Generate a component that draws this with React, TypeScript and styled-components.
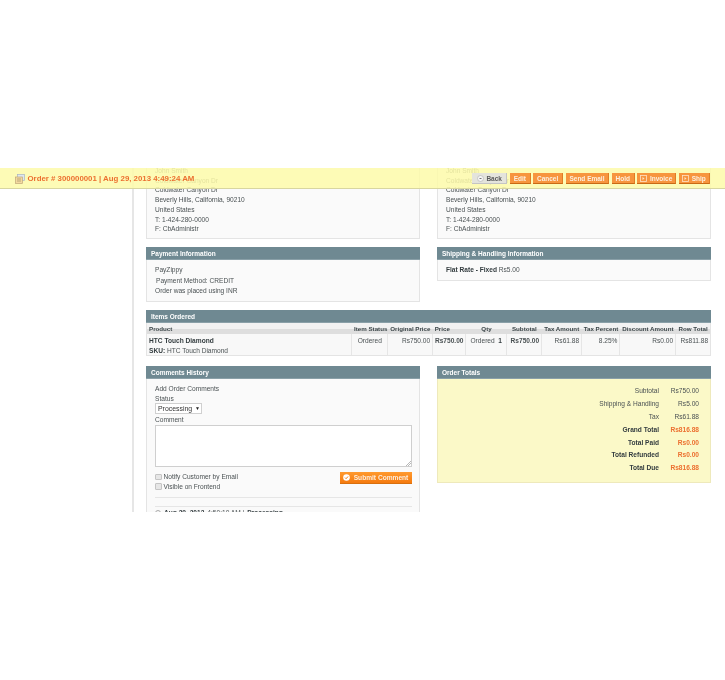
import React from 'react';
import styled, { createGlobalStyle } from 'styled-components';

const Global = createGlobalStyle`
  html, body { margin: 0; padding: 0; background: #fff; }
  body { font-family: "Liberation Sans", Arial, sans-serif; font-size: 6.6px; line-height: 9.7px; color: #4a5153; }
  * { box-sizing: border-box; }
`;

const Page = styled.div`
  position: relative;
  width: 725px;
  height: 680px;
  overflow: hidden;
  filter: blur(0.42px);
`;
const Viewport = styled.div`
  margin-top: 168px;
  height: 344px;
  overflow: hidden;
`;
const Main = styled.main`
  margin-left: 132px;
  width: 579px;
  border-left: 2px solid #e6e6e6;
  padding-left: 12px;
  height: 350px;
`;
const Row = styled.div<{ $mb: number; $mt?: number }>`
  display: grid;
  grid-template-columns: 273.5px 273.5px;
  gap: 17.5px;
  align-items: start;
  margin-top: ${p => p.$mt ?? 0}px;
  margin-bottom: ${p => p.$mb}px;
`;
const Box = styled.section<{ $h?: number }>`
  ${p => (p.$h ? `height: ${p.$h}px;` : '')}
  background: #fafafa;
  border: 1px solid #e4e4e4;
  border-top: 0;
  padding: 4px 8px 0;
  line-height: 9.7px;
`;
const Head = styled.h4`
  margin: 0;
  height: 13px;
  padding: 0 5px;
  background: #6f8992;
  color: #fff;
  font-size: 6.5px;
  font-weight: bold;
  line-height: 13.5px;
  border-bottom: 1px solid #8aa0a8;
`;
const Line = styled.div<{ $mt?: number; $ml?: number }>`
  white-space: nowrap;
  margin-top: ${p => p.$mt ?? 0}px;
  margin-left: ${p => p.$ml ?? 0}px;
`;
const Bar = styled.header`
  position: absolute;
  left: 0;
  top: 168px;
  width: 725px;
  height: 20.5px;
  background: rgba(253, 250, 170, 0.86);
  border-bottom: 1px solid #d8d6a0;
  display: flex;
  align-items: flex-start;
  padding: 5px 15px 0 15px;
`;
const Title = styled.h3`
  margin: 0;
  flex: 1;
  display: flex;
  align-items: center;
  gap: 2.5px;
  height: 11px;
  font-size: 7.85px;
  font-weight: bold;
  color: #ec7030;
`;
const Buttons = styled.div`
  display: flex;
  gap: 2.6px;
`;
const Btn = styled.button<{ $w: number; $back?: boolean }>`
  width: ${p => p.$w}px;
  height: 11px;
  padding: 0;
  border: 0;
  border-bottom: 1px solid ${p => (p.$back ? '#c4c4c4' : '#c96a14')};
  border-right: 1px solid ${p => (p.$back ? '#c4c4c4' : '#e07c24')};
  background: ${p => (p.$back ? '#e4e4dc' : '#f7953e')};
  color: ${p => (p.$back ? '#5a5a5a' : '#fdeede')};
  font: bold 6.5px "Liberation Sans", Arial, sans-serif;
  display: inline-flex;
  align-items: center;
  justify-content: center;
  gap: 2.5px;
`;
const ItemsBox = styled.section`
  width: 565px;
  margin-bottom: 10px;
`;
const cols = '205px 36px 44.7px 33.3px 41px 34.7px 40px 38.3px 55.7px 35px';
const ThRow = styled.div`
  display: grid;
  grid-template-columns: ${cols};
  height: 11px;
  background: linear-gradient(#f2f2f2 0 50%, #dedede 50% 100%);
  border-left: 1px solid #e4e4e4;
  border-right: 1px solid #e4e4e4;
`;
const Th = styled.div<{ $c?: boolean }>`
  padding: 0 2px;
  font-weight: bold;
  font-size: 6.2px;
  line-height: 11px;
  white-space: nowrap;
  color: #3b4548;
  text-align: ${p => (p.$c ? 'center' : 'left')};
`;
const TdRow = styled.div`
  display: grid;
  grid-template-columns: ${cols};
  height: 22px;
  background: #f8f8f8;
  border: 1px solid #e4e4e4;
  border-top: 0;
`;
const Td = styled.div<{ $a?: string; $b?: boolean }>`
  padding: 2px 1.5px 0 2px;
  border-right: 1px solid #e6e6e6;
  text-align: ${p => p.$a ?? 'right'};
  font-weight: ${p => (p.$b ? 'bold' : 'normal')};
  white-space: nowrap;
  &:last-child { border-right: 0; padding-right: 2.5px; }
`;
const Strong = styled.strong`
  font-weight: bold;
  color: #333c3f;
`;
const Sku = styled.div``;
const SelectBox = styled.div`
  width: 47px;
  height: 11px;
  margin-top: -0.5px;
  border: 1px solid #d0d0d0;
  background: #fff;
  font-size: 6.9px;
  line-height: 9px;
  padding-left: 2px;
  display: flex;
  gap: 3px;
  color: #333;
`;
const Caret = styled.span`
  font-size: 5px;
  color: #222;
`;
const TextArea = styled.div`
  position: relative;
  width: 257px;
  height: 42px;
  background: #fff;
  border: 1px solid #cfcfcf;
`;
const Grip = styled.svg`
  position: absolute;
  right: 0;
  bottom: 0;
`;
const FormFoot = styled.div`
  display: flex;
  justify-content: space-between;
  width: 256.5px;
  margin-top: 5px;
`;
const Checks = styled.div`
  display: flex;
  flex-direction: column;
`;
const Check = styled.label`
  display: flex;
  align-items: center;
  gap: 2px;
  height: 9.7px;
`;
const Tick = styled.span`
  width: 6.5px;
  height: 6.5px;
  border: 1px solid #c4c4c4;
  border-radius: 1px;
  background: #e6e6e6;
`;
const Submit = styled.button`
  width: 72px;
  height: 12px;
  padding: 0;
  border: 0;
  border-bottom: 1px solid #d8700e;
  background: linear-gradient(#ff9a2f, #f57a0e);
  color: #fdeede;
  font: bold 6.6px "Liberation Sans", Arial, sans-serif;
  display: flex;
  align-items: center;
  justify-content: center;
  gap: 4px;
`;
const Hr = styled.div<{ $mt: number }>`
  width: 257px;
  height: 1px;
  background: #e6e6e6;
  margin-top: ${p => p.$mt}px;
`;
const Hist = styled.div`
  display: flex;
  align-items: center;
  gap: 3px;
  margin-top: 1.5px;
`;
const Round = styled.span`
  width: 6px;
  height: 6px;
  border-radius: 50%;
  border: 1px solid #aaa;
`;
const Totals = styled.section`
  height: 104px;
  background: #fbf9c8;
  border: 1px solid #eee9bb;
  border-top: 0;
  padding-top: 6px;
`;
const TotalRow = styled.div`
  display: grid;
  grid-template-columns: 1fr 40px;
  height: 12.9px;
  line-height: 12.9px;
  padding-right: 10.5px;
  text-align: right;
`;
const Val = styled.span<{ $o?: boolean }>`
  color: ${p => (p.$o ? '#ec7030' : 'inherit')};
  font-weight: ${p => (p.$o ? 'bold' : 'normal')};
`;

const OrderIcon = () => (
  <svg width="10" height="10" viewBox="0 0 10 10">
    <rect x="2.5" y="0.5" width="7" height="6" fill="#dfe7f0" stroke="#a9b5c2" strokeWidth="0.7" />
    <rect x="0.5" y="3" width="7" height="6.5" fill="#f3d9a0" stroke="#c0a878" strokeWidth="0.7" />
    <path d="M2 5h4M2 7h4" stroke="#a39468" strokeWidth="0.7" />
  </svg>
);
const PageIcon = () => (
  <svg width="7" height="7" viewBox="0 0 7 7">
    <rect x="0.5" y="0.5" width="6" height="6" fill="none" stroke="#fde3c8" strokeWidth="0.8" />
    <path d="M2.5 2l2 1.5-2 1.5z" fill="#fde3c8" />
  </svg>
);
const BackIcon = () => (
  <svg width="7" height="7" viewBox="0 0 7 7">
    <circle cx="3.5" cy="3.5" r="3" fill="#f6f6f6" stroke="#b0b0b0" strokeWidth="0.6" />
    <path d="M4.5 3.5H2.5" stroke="#666" strokeWidth="0.9" />
  </svg>
);
const CheckIcon = () => (
  <svg width="7" height="7" viewBox="0 0 7 7">
    <circle cx="3.5" cy="3.5" r="3.3" fill="#fff" />
    <path d="M2 3.6l1.1 1.1L5 2.5" stroke="#f57a0e" strokeWidth="1" fill="none" />
  </svg>
);

const Address = () => (
  <>
    <Line>John Smith</Line>
    <Line>Coldwater Canyon Dr</Line>
    <Line>Coldwater Canyon Dr</Line>
    <Line>Beverly Hills, California, 90210</Line>
    <Line>United States</Line>
    <Line>T: 1-424-280-0000</Line>
    <Line>F: CbAdministr</Line>
  </>
);

export default function App() {
  return (
    <Page>
      <Global />
      <Viewport>
        <Main>
          <Row $mt={-6} $mb={8}>
            <Box $h={77}><Address /></Box>
            <Box $h={77}><Address /></Box>
          </Row>
          <Row $mb={8}>
            <div>
              <Head>Payment Information</Head>
              <Box $h={42}>
                <Line $mt={1}>PayZippy</Line>
                <Line $ml={1} $mt={1}>Payment Method: CREDIT</Line>
                <Line $mt={1}>Order was placed using INR</Line>
              </Box>
            </div>
            <div>
              <Head>Shipping &amp; Handling Information</Head>
              <Box $h={21}>
                <Line $mt={1}><Strong>Flat Rate - Fixed</Strong> Rs5.00</Line>
              </Box>
            </div>
          </Row>
          <ItemsBox>
            <Head>Items Ordered</Head>
            <ThRow>
              <Th>Product</Th><Th $c>Item Status</Th><Th $c>Original Price</Th><Th>Price</Th><Th $c>Qty</Th>
              <Th $c>Subtotal</Th><Th $c>Tax Amount</Th><Th $c>Tax Percent</Th><Th $c>Discount Amount</Th><Th $c>Row Total</Th>
            </ThRow>
            <TdRow>
              <Td $a="left">
                <Strong>HTC Touch Diamond</Strong>
                <Sku><Strong>SKU:</Strong> HTC Touch Diamond</Sku>
              </Td>
              <Td $a="center">Ordered</Td>
              <Td>Rs750.00</Td>
              <Td $b>Rs750.00</Td>
              <Td $a="center">Ordered&nbsp; <Strong>1</Strong></Td>
              <Td $b>Rs750.00</Td>
              <Td>Rs61.88</Td>
              <Td>8.25%</Td>
              <Td>Rs0.00</Td>
              <Td>Rs811.88</Td>
            </TdRow>
          </ItemsBox>
          <Row $mb={0}>
            <div>
              <Head>Comments History</Head>
              <Box $h={200}>
                <Line $mt={1}>Add Order Comments</Line>
                <Line>Status</Line>
                <SelectBox>Processing <Caret>▼</Caret></SelectBox>
                <Line $mt={1.5}>Comment</Line>
                <TextArea>
                  <Grip width="6" height="6" viewBox="0 0 6 6">
                    <path d="M1 6l5-5M3 6l3-3" stroke="#999" strokeWidth="0.7" />
                  </Grip>
                </TextArea>
                <FormFoot>
                  <Checks>
                    <Check><Tick />Notify Customer by Email</Check>
                    <Check><Tick />Visible on Frontend</Check>
                  </Checks>
                  <Submit><CheckIcon />Submit Comment</Submit>
                </FormFoot>
                <Hr $mt={5.5} />
                <Hr $mt={8} />
                <Hist><Round /><Strong>Aug 29, 2013</Strong> 4:50:10 AM | <Strong>Processing</Strong></Hist>
              </Box>
            </div>
            <div>
              <Head>Order Totals</Head>
              <Totals>
                <TotalRow><span>Subtotal</span><Val>Rs750.00</Val></TotalRow>
                <TotalRow><span>Shipping &amp; Handling</span><Val>Rs5.00</Val></TotalRow>
                <TotalRow><span>Tax</span><Val>Rs61.88</Val></TotalRow>
                <TotalRow><Strong>Grand Total</Strong><Val $o>Rs816.88</Val></TotalRow>
                <TotalRow><Strong>Total Paid</Strong><Val $o>Rs0.00</Val></TotalRow>
                <TotalRow><Strong>Total Refunded</Strong><Val $o>Rs0.00</Val></TotalRow>
                <TotalRow><Strong>Total Due</Strong><Val $o>Rs816.88</Val></TotalRow>
              </Totals>
            </div>
          </Row>
        </Main>
      </Viewport>
      <Bar>
        <Title><OrderIcon />Order # 300000001 | Aug 29, 2013 4:49:24 AM</Title>
        <Buttons>
          <Btn $w={35} $back><BackIcon />Back</Btn>
          <Btn $w={20.5}>Edit</Btn>
          <Btn $w={30}>Cancel</Btn>
          <Btn $w={43.5}>Send Email</Btn>
          <Btn $w={23}>Hold</Btn>
          <Btn $w={39}><PageIcon />Invoice</Btn>
          <Btn $w={31}><PageIcon />Ship</Btn>
        </Buttons>
      </Bar>
    </Page>
  );
}
